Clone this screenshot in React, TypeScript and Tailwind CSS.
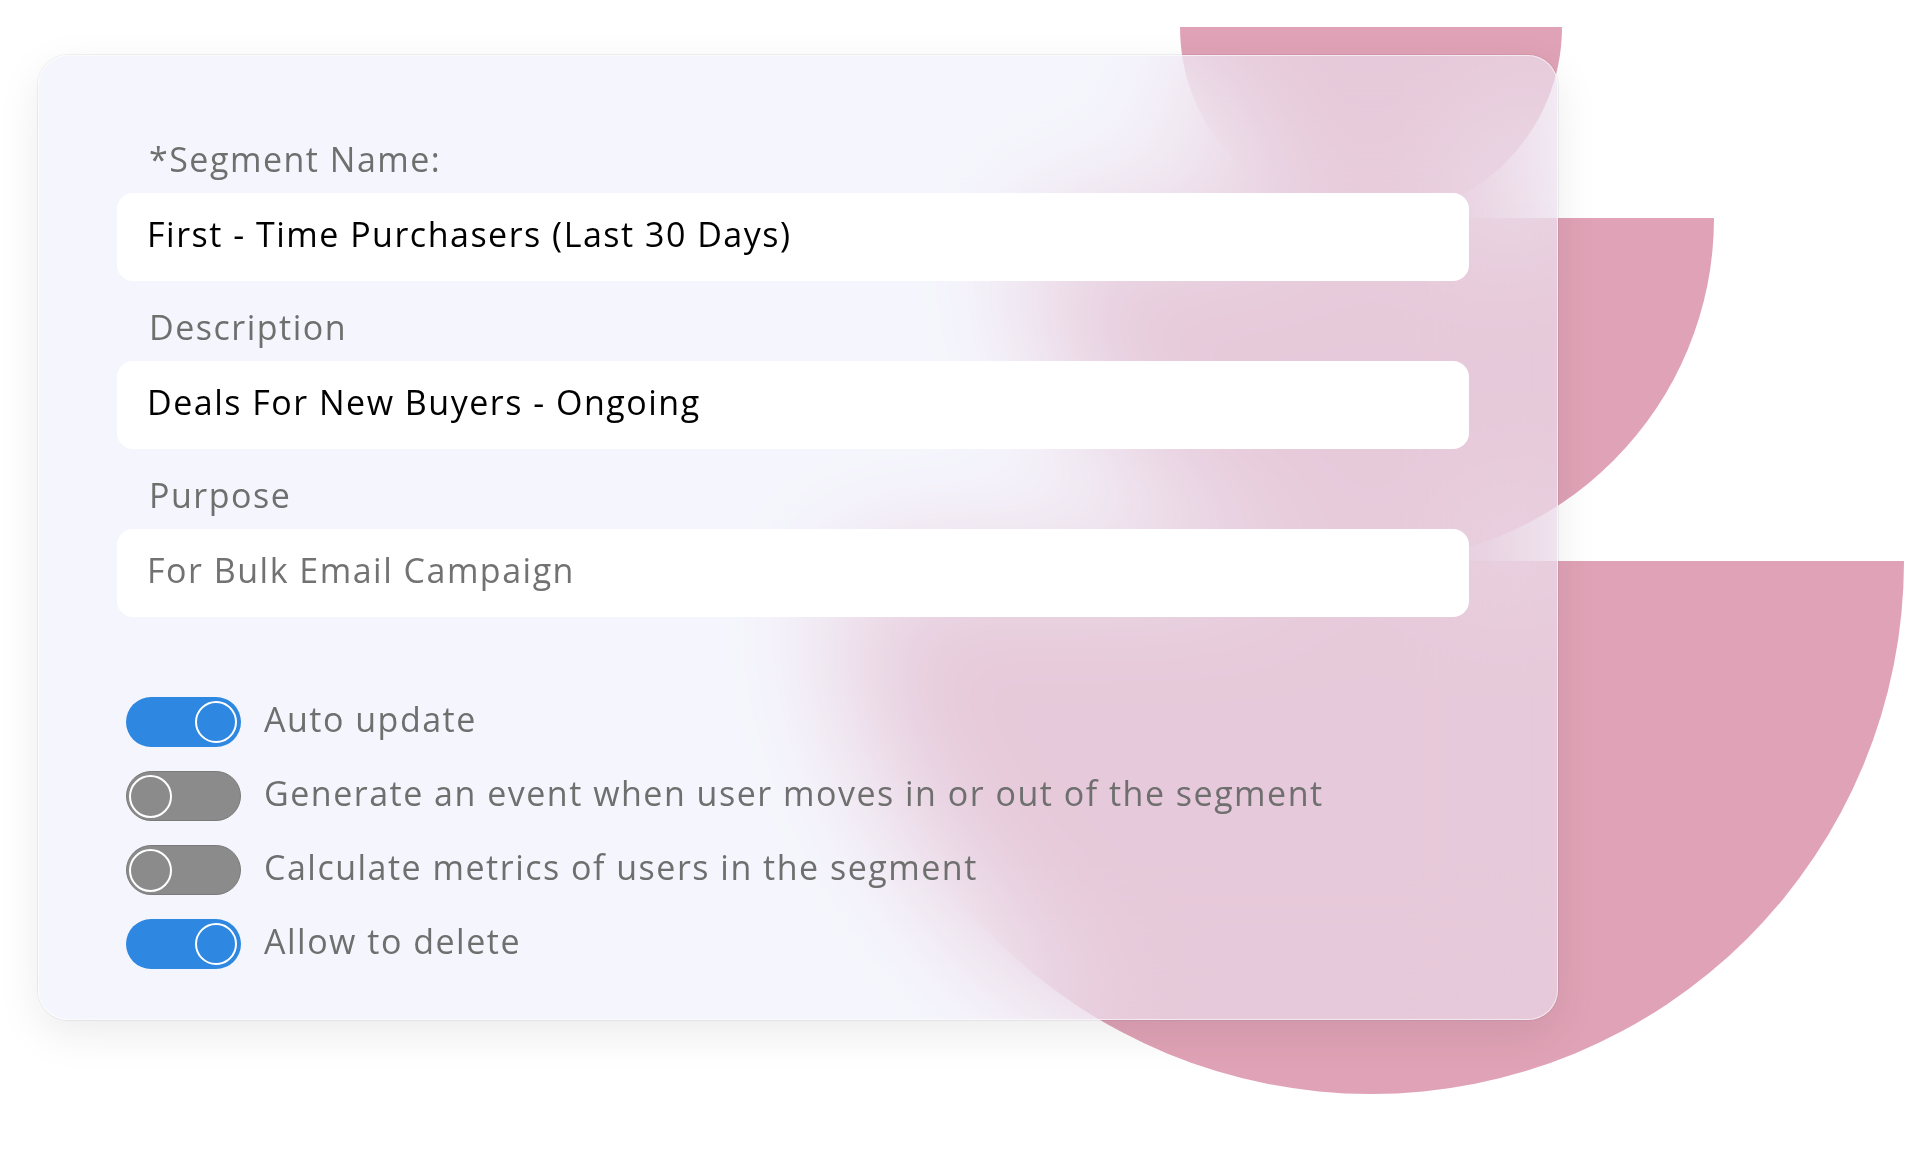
import { useState } from "react";

type Field = {
  id: string;
  label: string;
  value: string;
  muted?: boolean;
};

const fields: Field[] = [
  { id: "name", label: "*Segment Name:", value: "First - Time Purchasers (Last 30 Days)" },
  { id: "description", label: "Description", value: "Deals For New Buyers - Ongoing" },
  { id: "purpose", label: "Purpose", value: "For Bulk Email Campaign", muted: true },
];

const initialOptions = [
  { id: "auto", label: "Auto update", on: true },
  { id: "event", label: "Generate an event when user moves in or out of the segment", on: false },
  { id: "metrics", label: "Calculate metrics of users in the segment", on: false },
  { id: "delete", label: "Allow to delete", on: true },
];

function Toggle({ on, onClick }: { on: boolean; onClick: () => void }) {
  return (
    <button
      type="button"
      role="switch"
      aria-checked={on}
      onClick={onClick}
      className={
        on
          ? "flex h-[50px] w-[115px] shrink-0 items-center justify-end rounded-full bg-[#2e88e1] pr-[4px]"
          : "flex h-[50px] w-[115px] shrink-0 items-center justify-start rounded-full border border-[#7b7b7b] bg-[#8b8b8b] pl-[2px]"
      }>
      <span
        className={
          on
            ? "h-[42px] w-[42px] rounded-full border-[2.5px] border-white bg-[#2e88e1]"
            : "h-[43px] w-[43px] rounded-full border-[2.5px] border-white bg-[#8b8b8b]"
        }
      />
    </button>
  );
}

export default function App() {
  const [options, setOptions] = useState(initialOptions);

  const flip = (id: string) => {
    setOptions((prev) => prev.map((o) => (o.id === id ? { ...o, on: !o.on } : o)));
  };

  return (
    <div className="grid min-h-screen bg-white font-['Open_Sans','Liberation_Sans',sans-serif] tracking-[1.5px]">
      {/* Decorative stacked half circles */}
      <div className="col-start-1 row-start-1 ml-[838px] flex w-[1066px] flex-col items-center pt-[27px]">
        <div className="h-[191px] w-[382px] rounded-b-full bg-[#e0a2b6]" />
        <div className="h-[343px] w-[686px] rounded-b-full bg-[#e0a2b6]" />
        <div className="h-[533px] w-[1066px] rounded-b-full bg-[#e0a2b6]" />
      </div>

      {/* Segment card */}
      <div className="relative z-10 col-start-1 row-start-1 ml-[38px] mt-[55px] flex h-[965px] w-[1520px] flex-col self-start rounded-[30px] border border-white/60 bg-[rgba(236,238,252,0.52)] pl-[78px] pt-[83px] shadow-[0_0_0_1px_rgba(0,0,0,0.06),0_14px_44px_rgba(0,0,0,0.08)] backdrop-blur-3xl">
        <div className="flex flex-col gap-[26px]">
          {fields.map((field) => (
            <div key={field.id} className="flex flex-col">
              <label className="mb-[14px] pl-[32px] text-[34px] leading-[40px] text-[#6f6f6f]">
                {field.label}
              </label>
              <div
                className={`flex h-[88px] w-[1352px] items-center rounded-[16px] bg-white px-[30px] pb-[6px] text-[34px] ${
                  field.muted ? "text-[#727272]" : "text-black"
                }`}>
                {field.value}
              </div>
            </div>
          ))}
        </div>

        <div className="ml-[9px] mt-[80px] flex flex-col gap-[24px]">
          {options.map((opt) => (
            <div key={opt.id} className="flex h-[50px] items-center gap-[23px]">
              <Toggle on={opt.on} onClick={() => flip(opt.id)} />
              <span className="mb-[6px] text-[34px] leading-[40px] text-[#6f6f6f]">{opt.label}</span>
            </div>
          ))}
        </div>
      </div>
    </div>
  );
}
